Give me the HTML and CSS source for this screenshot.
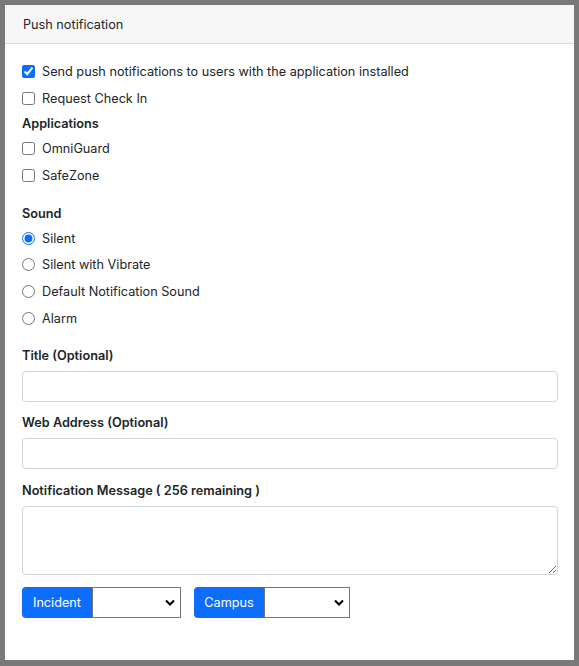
FILE: index.html
```html
<!DOCTYPE html>
<html>
<head>
    <meta charset="utf-8">
    <title>Push notification</title>
    <link rel="stylesheet" href="styles.css">
</head>
<body>
    <div class="card">
        <div class="card-header">Push notification</div>
        <div class="card-body">
            <label class="check">
                <input type="checkbox" checked>
                <span>Send push notifications to users with the application installed</span>
            </label>
            <label class="check">
                <input type="checkbox">
                <span>Request Check In</span>
            </label>

            <div class="group-title">Applications</div>
            <label class="check">
                <input type="checkbox">
                <span>OmniGuard</span>
            </label>
            <label class="check">
                <input type="checkbox">
                <span>SafeZone</span>
            </label>

            <div class="group-title sound-title">Sound</div>
            <label class="check radio">
                <input type="radio" name="sound" checked>
                <span>Silent</span>
            </label>
            <label class="check radio">
                <input type="radio" name="sound">
                <span>Silent with Vibrate</span>
            </label>
            <label class="check radio">
                <input type="radio" name="sound">
                <span>Default Notification Sound</span>
            </label>
            <label class="check radio">
                <input type="radio" name="sound">
                <span>Alarm</span>
            </label>

            <div class="field title-field">
                <label class="field-label">Title (Optional)</label>
                <input type="text" class="form-control">
            </div>
            <div class="field web-field">
                <label class="field-label">Web Address (Optional)</label>
                <input type="text" class="form-control">
            </div>
            <div class="field message-field">
                <label class="field-label">Notification Message ( 256 remaining )</label>
                <textarea class="form-control message"></textarea>
            </div>

            <div class="pickers">
                <div class="input-group">
                    <span class="group-btn">Incident</span>
                    <select class="picker incident"></select>
                </div>
                <div class="input-group">
                    <span class="group-btn">Campus</span>
                    <select class="picker campus"></select>
                </div>
            </div>
        </div>
    </div>
</body>
</html>
```

FILE: styles.css
```css
html, body {
    height: 100%;
}
body {
    margin: 0;
    padding: 5px 5px 6px 5px;
    box-sizing: border-box;
    background-color: #7a7979;
    font-family: Inter, "Liberation Sans", Arial, sans-serif;
    font-size: 12.7px;
    color: #212529;
}
.card {
    height: 100%;
    background-color: #ffffff;
    display: flex;
    flex-direction: column;
}
.card-header {
    height: 39px;
    box-sizing: border-box;
    padding: 0 18px;
    display: flex;
    align-items: center;
    background-color: #f7f7f8;
    border-bottom: 1px solid #dcdcdc;
}
.card-body {
    padding: 14px 16px 0 17px;
    display: flex;
    flex-direction: column;
}
.check {
    display: flex;
    align-items: center;
    height: 27px;
}
.radio {
    height: 26.67px;
}
.check input {
    width: 13px;
    height: 13px;
    margin: 0 7px 0 0;
    accent-color: #0d6efd;
}
.group-title {
    font-weight: 600;
    height: 23px;
    display: flex;
    align-items: center;
}
.sound-title {
    margin-top: 13px;
}
.field {
    display: flex;
    flex-direction: column;
}
.title-field {
    margin-top: 13px;
}
.web-field {
    margin-top: 10px;
}
.message-field {
    margin-top: 11px;
}
.field-label {
    font-weight: 600;
    height: 22px;
    display: flex;
    align-items: center;
    margin-bottom: 4px;
}
.form-control {
    box-sizing: border-box;
    width: 100%;
    height: 31px;
    margin: 0;
    border: 1px solid #ced4da;
    border-radius: 4px;
    font: inherit;
}
.message {
    height: 69px;
    resize: vertical;
}
.pickers {
    display: flex;
    gap: 13px;
    margin-top: 12px;
}
.input-group {
    display: flex;
    height: 31px;
}
.group-btn {
    display: flex;
    align-items: center;
    justify-content: center;
    width: 70px;
    background-color: #0d6efd;
    color: #ffffff;
    border-radius: 4px 0 0 4px;
}
.picker {
    appearance: none;
    box-sizing: border-box;
    height: 31px;
    margin: 0;
    border: 1px solid #767676;
    background: #ffffff url("data:image/svg+xml;utf8,<svg xmlns='http://www.w3.org/2000/svg' width='10' height='7' viewBox='0 0 10 7'><path d='M1 1.5l4 4 4-4' fill='none' stroke='black' stroke-width='2'/></svg>") no-repeat right 5px center;
}
.incident {
    width: 89px;
}
.campus {
    width: 86px;
}
```
